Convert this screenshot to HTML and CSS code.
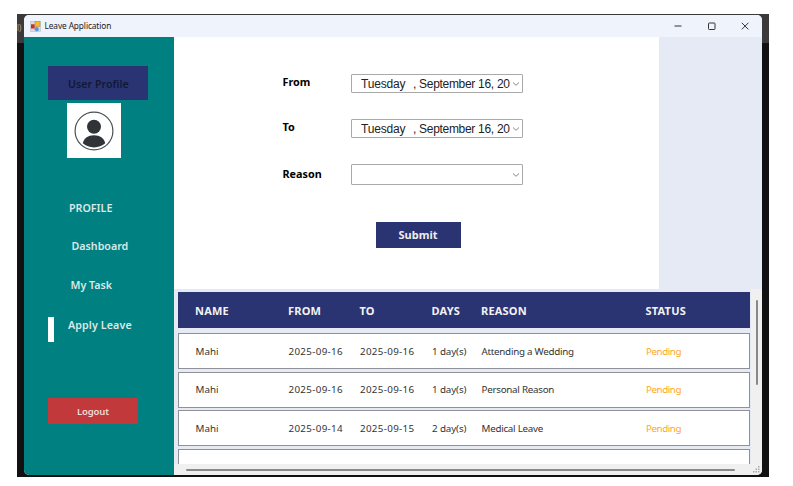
FILE: index.html
```html
<!DOCTYPE html>
<html lang="en">
<head>
<meta charset="utf-8">
<title>Leave Application</title>
<link rel="stylesheet" href="styles.css">
</head>
<body>
<div class="desktop">
  <span class="behind">l)</span>
  <div class="window">
    <header class="titlebar">
      <svg class="app-icon" width="11" height="11" viewBox="0 0 11 11">
        <rect x=".5" y=".5" width="10" height="10" fill="#d8dbe0" stroke="#b9bcc4" stroke-width=".6"/>
        <rect x="1" y="3.3" width="3.7" height="4.2" fill="#c92f2d"/>
        <rect x="5" y=".6" width="5" height="5" fill="#f3bd27" stroke="#ad8431" stroke-width=".5"/>
        <circle cx="6.7" cy="8.2" r="2.1" fill="#5594ed"/>
      </svg>
      <span class="title">Leave Application</span>
      <div class="controls">
        <svg width="10" height="10" viewBox="0 0 10 10"><path d="M1.5 5h7"/></svg>
        <svg width="10" height="10" viewBox="0 0 10 10"><rect x="1.5" y="2" width="6.5" height="6.5" rx=".8"/></svg>
        <svg width="10" height="10" viewBox="0 0 10 10"><path d="M1.8 1.8l6.6 6.6M8.4 1.8L1.8 8.4"/></svg>
      </div>
    </header>
    <div class="body">
      <aside class="sidebar">
        <div class="user-profile"><span>User Profile</span></div>
        <div class="avatar">
          <svg width="40" height="40" viewBox="0 0 40 40">
            <circle cx="20" cy="20" r="18.9" fill="none" stroke="#4d5054" stroke-width="1.2"/>
            <circle cx="20" cy="15.7" r="7" fill="#303338"/>
            <path d="M8.8 32.3C10 27 14 24.2 20 24.2s10 2.8 11.2 8.1C28 35 24.5 36.4 20 36.4S12 35 8.8 32.3z" fill="#303338"/>
          </svg>
        </div>
        <nav class="nav">
          <a class="profile">PROFILE</a>
          <a class="dashboard">Dashboard</a>
          <a class="task">My Task</a>
          <a class="apply">Apply Leave</a>
        </nav>
        <button class="logout">Logout</button>
      </aside>
      <main class="main">
        <div class="upper">
          <form class="form">
            <div class="field"><label>From</label><div class="input"><span class="day">Tuesday</span><span class="date">, September 16, 20</span><svg class="chev" width="8" height="6" viewBox="0 0 8 6"><path d="M1 1.5l3 2.8L7 1.5"/></svg></div></div>
            <div class="field"><label>To</label><div class="input"><span class="day">Tuesday</span><span class="date">, September 16, 20</span><svg class="chev" width="8" height="6" viewBox="0 0 8 6"><path d="M1 1.5l3 2.8L7 1.5"/></svg></div></div>
            <div class="field reason"><label>Reason</label><div class="input"><svg class="chev" width="8" height="6" viewBox="0 0 8 6"><path d="M1 1.5l3 2.8L7 1.5"/></svg></div></div>
            <button type="button" class="submit">Submit</button>
          </form>
        </div>
        <section class="lower">
          <div class="list">
            <div class="row head"><span>NAME</span><span>FROM</span><span>TO</span><span>DAYS</span><span>REASON</span><span>STATUS</span></div>
            <div class="row"><span class="name">Mahi</span><span>2025-09-16</span><span>2025-09-16</span><span class="days">1 day(s)</span><span class="why">Attending a Wedding</span><span class="status">Pending</span></div>
            <div class="row"><span class="name">Mahi</span><span>2025-09-16</span><span>2025-09-16</span><span class="days">1 day(s)</span><span class="why">Personal Reason</span><span class="status">Pending</span></div>
            <div class="row"><span class="name">Mahi</span><span>2025-09-14</span><span>2025-09-15</span><span class="days">2 day(s)</span><span class="why">Medical Leave</span><span class="status">Pending</span></div>
            <div class="row"></div>
          </div>
          <div class="vscroll"><i></i></div>
          <div class="hscroll"><i></i>
            <svg width="8" height="8" viewBox="0 0 8 8" fill="#aaa"><path d="M5 0h1.5v1.5H5zM2.500 2.500H4V4H2.500zM5 2.500h1.500V4H5zM0 5h1.500v1.500H0zM2.500 5H4v1.500H2.500zM5 5h1.500v1.500H5z"/></svg>
          </div>
        </section>
      </main>
    </div>
  </div>
</div>
</body>
</html>
```
FILE: styles.css
```css
* { box-sizing: border-box; }
body {
  margin: 0;
  width: 793px;
  height: 486px;
  padding: 14px 24px 9px 17px;
  background: #fff;
  overflow: hidden;
  font-family: "Noto Sans", sans-serif;
}
button { border: 0; padding: 0; font-family: inherit; }
.desktop {
  position: relative;
  width: 752px;
  height: 463px;
  padding: 1px 7px 2px;
  background: linear-gradient(#3b3939 29px, #111 29px);
}
.behind { position: absolute; left: 0; top: 7px; color: #aaa; font-size: 8px; line-height: 14px; }
.window {
  position: relative;
  width: 738px;
  height: 460px;
  border-radius: 5px;
  overflow: hidden;
  background: #e5eaf5;
}
.titlebar { display: flex; align-items: center; height: 22px; padding: 0 12px 0 6px; background: #eff3fb; }
.title { margin-left: 3.5px; font-size: 8.3px; letter-spacing: -.1px; color: #222; white-space: nowrap; line-height: 12px; }
.controls { display: flex; gap: 23.5px; margin-left: auto; }
.controls svg { fill: none; stroke: #333; stroke-width: 1; }
.body { display: flex; height: 438px; }
.sidebar { width: 150px; padding: 29px 0 0 24px; background: #008080; }
.user-profile {
  display: flex;
  align-items: center;
  width: 100px;
  height: 34px;
  padding: 1px 0 0 20px;
  background: #2a3473;
  color: #111936;
  font-weight: 600;
  font-size: 10.7px;
  white-space: nowrap;
}
.avatar { display: flex; align-items: center; justify-content: center; width: 54px; height: 55px; margin: 3px 0 0 19px; background: #fff; }
.nav { display: flex; flex-direction: column; margin-top: 42px; height: 142px; color: #d9e9e9; font-size: 10.7px; font-weight: 600; line-height: 16px; white-space: nowrap; }
.profile { margin-left: 21px; }
.dashboard { margin: 22px 0 0 23.5px; }
.task { margin: 23px 0 0 22.5px; }
.apply { margin-top: 24px; height: 25px; padding-left: 14px; border-left: 6px solid #fff; letter-spacing: .1px; }
.logout { display: block; width: 90px; height: 26px; margin-top: 56px; background: #c1393a; color: #efdcdc; font-weight: 600; font-size: 9.5px; letter-spacing: -.15px; }
.main { width: 588px; }
.upper { height: 252px; background: #e5eaf5; }
.form { width: 485px; height: 252px; padding: 37px 0 0 108.5px; background: #fff; }
.field { display: flex; height: 19px; margin-bottom: 26px; }
.field label { width: 68.5px; font-size: 10.8px; font-weight: 700; line-height: 16px; color: #000; }
.input { display: flex; align-items: center; width: 172px; height: 19px; padding: 0 2px 0 9px; border: 1px solid #a9a9a9; border-radius: 1px; font: 12px "Liberation Sans", sans-serif; color: #222; white-space: pre; }
.day { flex: none; width: 52px; letter-spacing: -.2px; }
.date { flex: none; letter-spacing: -.3px; }
.chev { flex: none; margin-left: auto; fill: none; stroke: #888; stroke-width: 1; }
.reason .input { height: 21px; }
.reason label { line-height: 20px; }
.submit { display: block; width: 85px; height: 26px; padding-bottom: 1px; margin: 39px 0 0 93px; background: #2a3473; color: #eee; font-size: 11px; font-weight: 700; }
.lower { display: grid; grid-template-columns: 577px 11px; grid-template-rows: 175px 11px; height: 186px; }
.list { padding: 3px 0 0 4px; overflow: hidden; }
.row {
  display: grid;
  grid-template-columns: 93px 71.5px 72px 49.5px 164.5px 1fr;
  align-items: center;
  width: 572px;
  height: 36px;
  margin-bottom: 2.6px;
  padding-left: 16.5px;
  border: 1px solid #8f9197;
  background: #fff;
  color: #333;
  font-size: 9.8px;
  letter-spacing: .33px;
  white-space: nowrap;
}
.row.head { margin-bottom: 5px; padding: 0 0 0 16px; border-color: #2a3473; background: #2a3473; color: #f2f2f2; font-size: 11px; font-weight: 700; letter-spacing: .2px; }
.row .name { letter-spacing: 0; }
.row .days { letter-spacing: -.12px; }
.row .why { letter-spacing: -.26px; }
.row .status { color: #ffa71f; letter-spacing: -.45px; }
.vscroll { padding: 11px 0 0 5px; background: #f0f0f0; }
.vscroll i { display: block; width: 2px; height: 85px; background: #888; border-radius: 1px; }
.hscroll { grid-column: 1 / 3; display: flex; align-items: center; justify-content: space-between; padding: 0 1px 0 12px; background: #f0f0f0; }
.hscroll i { width: 549px; height: 2px; background: #8a8a8a; border-radius: 1px; }
```
